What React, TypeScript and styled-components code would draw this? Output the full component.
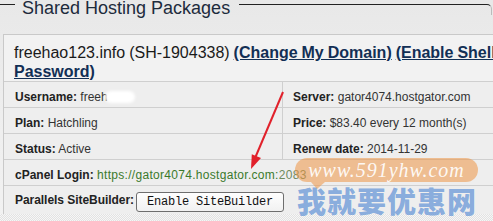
import React from "react";
import styled, { createGlobalStyle } from "styled-components";

const Global = createGlobalStyle`
  html, body { margin: 0; padding: 0; }
  body { font-family: "Liberation Sans", Arial, sans-serif; background: #ececec; }
`;

const Page = styled.div`
  position: relative;
  width: 493px;
  height: 221px;
  overflow: hidden;
  background: linear-gradient(180deg, #e8e8e8 0%, #efefef 60%, #f2f2f2 100%);
  display: flex;
  flex-direction: column;
`;

const TitleBar = styled.div`
  height: 34px;
  display: flex;
  align-items: flex-start;
  flex-shrink: 0;
`;

const LeftRule = styled.div`
  width: 15px;
  margin-top: 4px;
  border-top: 1px solid #222;
`;

const Legend = styled.div`
  margin-top: -1px;
  padding: 0 9px 0 7px;
  font-size: 18px;
  line-height: 18px;
  color: #1d2b3c;
  white-space: nowrap;
`;

const RightRule = styled.div`
  flex: 1;
  margin-top: 4px;
  margin-right: 1px;
  height: 10px;
  border-top: 1px solid #222;
  border-right: 1px solid #bbb;
  border-top-right-radius: 5px;
`;

const Panel = styled.div`
  margin-left: 3px;
  width: 540px;
  border-top: 1px solid #c9c9c9;
  border-left: 1px solid #c9c9c9;
  background: #eeeeee;
  flex-shrink: 0;
`;

const Header = styled.div`
  padding: 8px 10px 0 10px;
  height: 38px;
  font-size: 16px;
  line-height: 19px;
  color: #1a1a1a;
  background: #f2f2f2;
  word-spacing: -0.5px;
`;

const HeadLink = styled.a`
  color: #122f55;
  font-weight: bold;
  text-decoration: underline;
  cursor: pointer;
`;

const Grid = styled.div`
  display: grid;
  grid-template-columns: 278px 1fr;
`;

const Cell = styled.div<{ $right?: boolean; $full?: boolean }>`
  grid-column: ${(p) => (p.$full ? "1 / span 2" : "auto")};
  height: 17px;
  padding: 8px 10px 0 ${(p) => (p.$right ? "10px" : "11px")};
  border-top: 1px solid #cfcfcf;
  border-left: ${(p) => (p.$right ? "1px solid #cfcfcf" : "none")};
  font-size: 12px;
  line-height: 14px;
  color: #333;
  white-space: nowrap;
`;

const ButtonCell = styled.div`
  grid-column: 1 / span 2;
  height: 22px;
  padding: 6px 10px 0 11px;
  border-top: 1px solid #cfcfcf;
  display: flex;
  align-items: flex-start;
  font-size: 12px;
  line-height: 14px;
  color: #333;
`;

const Label = styled.b`
  color: #222;
  font-weight: bold;
`;

const ButtonLabel = styled(Label)`
  margin-top: 1px;
  margin-right: 2px;
  white-space: nowrap;
  letter-spacing: -0.05px;
`;

const GreenLink = styled.a`
  color: #3b7a2c;
  letter-spacing: 0.3px;
`;

const Port = styled.span`
  color: #6f8a5e;
`;

const Blur = styled.span`
  display: inline-block;
  width: 30px;
  height: 12px;
  margin-left: -3px;
  vertical-align: -2px;
  background: #fff;
  border-radius: 6px;
  filter: blur(1.5px);
`;

const Button = styled.button`
  height: 20px;
  width: 148px;
  padding: 0 0 0 10px;
  text-align: left;
  border: 1px solid #6e6e6e;
  border-radius: 3px;
  background: linear-gradient(180deg, #fefefe 0%, #f1f1f1 100%);
  font-family: "Liberation Mono", "Courier New", monospace;
  font-size: 12px;
  letter-spacing: -0.2px;
  color: #111;
`;

const Dots = styled.div`
  flex: 1;
  background-color: #f6f6f6;
  background-image: conic-gradient(#e2e2e2 25%, transparent 0 50%, #e2e2e2 0 75%, transparent 0);
  background-size: 2px 2px;
`;

const Arrow = styled.svg`
  position: absolute;
  left: 0;
  top: 0;
  pointer-events: none;
`;

const Watermark = styled.div`
  position: absolute;
  left: 295px;
  top: 158px;
  width: 184px;
  display: flex;
  flex-direction: column;
  align-items: flex-start;
  pointer-events: none;
`;

const Bubble = styled.div`
  position: relative;
  width: 183px;
  height: 24px;
  border-radius: 12px;
  background: rgba(238, 150, 70, 0.55);
  color: rgba(255, 255, 255, 0.92);
  font-family: "Liberation Serif", "Times New Roman", serif;
  font-style: italic;
  font-size: 20px;
  line-height: 24px;
  letter-spacing: 1px;
  text-align: center;
  &::after {
    content: "";
    position: absolute;
    left: 16px;
    bottom: -7px;
    border-left: 6px solid transparent;
    border-right: 8px solid transparent;
    border-top: 7px solid rgba(238, 150, 70, 0.55);
  }
`;

const Chinese = styled.div`
  margin-top: 1px;
  margin-left: 2px;
  font-family: "Noto Sans CJK SC", sans-serif;
  font-weight: 900;
  font-size: 29px;
  line-height: 34px;
  letter-spacing: 1px;
  color: rgba(70, 130, 210, 0.62);
  white-space: nowrap;
`;

export default function App() {
  return (
    <>
      <Global />
      <Page>
        <TitleBar>
          <LeftRule />
          <Legend>Shared Hosting Packages</Legend>
          <RightRule />
        </TitleBar>
        <Panel>
          <Header>
            freehao123.info (SH-1904338) <HeadLink>(Change My Domain)</HeadLink>{" "}
            <HeadLink>(Enable Shell Password)</HeadLink>
          </Header>
          <Grid>
            <Cell>
              <Label>Username:</Label> freeh<Blur />
            </Cell>
            <Cell $right>
              <Label>Server:</Label> gator4074.hostgator.com
            </Cell>
            <Cell>
              <Label>Plan:</Label> Hatchling
            </Cell>
            <Cell $right>
              <Label>Price:</Label> $83.40 every 12 month(s)
            </Cell>
            <Cell>
              <Label>Status:</Label> Active
            </Cell>
            <Cell $right>
              <Label>Renew date:</Label> 2014-11-29
            </Cell>
            <Cell $full>
              <Label>cPanel Login:</Label>{" "}
              <GreenLink>
                https://gator4074.hostgator.com:<Port>2083</Port>
              </GreenLink>
            </Cell>
            <ButtonCell>
              <ButtonLabel>Parallels SiteBuilder:</ButtonLabel>
              <Button>Enable SiteBuilder</Button>
            </ButtonCell>
          </Grid>
        </Panel>
        <Dots />
        <Arrow width="493" height="221" viewBox="0 0 493 221">
          <line x1="283" y1="92" x2="255.5" y2="157" stroke="#e1212b" strokeWidth="2" />
          <polygon points="251,169 261,158 251.8,154.2" fill="#e1212b" />
        </Arrow>
        <Watermark>
          <Bubble>www.591yhw.com</Bubble>
          <Chinese>我就要优惠网</Chinese>
        </Watermark>
      </Page>
    </>
  );
}
